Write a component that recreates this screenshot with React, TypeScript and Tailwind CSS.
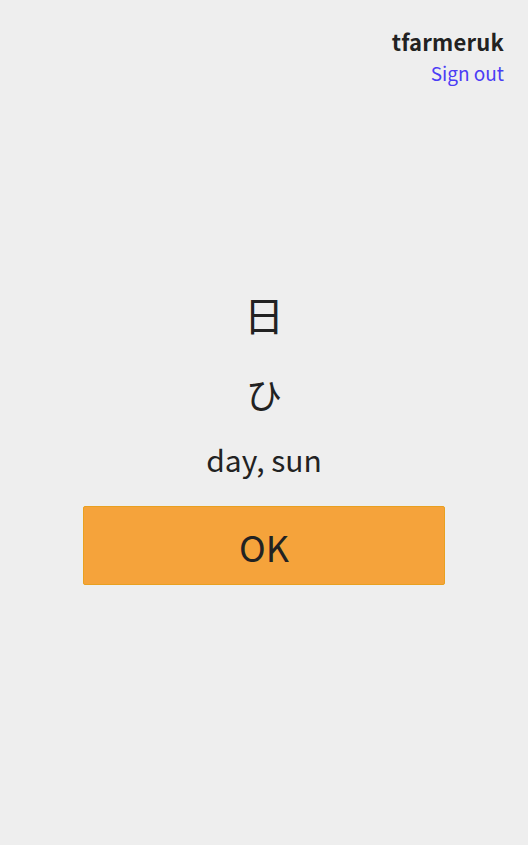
export default function App() {
  return (
    <div
      className="min-h-[845px] bg-[#eeeeee] text-[#222222] flex flex-col"
      style={{ fontFamily: '"Noto Sans CJK JP", "Noto Sans", sans-serif' }}
    >
      <header className="flex flex-col items-end pt-[26px] pr-[24px]">
        <div className="text-[22px] font-bold leading-[30px] tracking-[0.2px]">tfarmeruk</div>
        <a href="#" className="text-[19px] leading-[32px] mt-[1px] text-[#4b3cf5]">
          Sign out
        </a>
      </header>
      <main className="flex flex-col items-center pt-[197px]">
        <div className="text-[40px] leading-[56px]">日</div>
        <div className="text-[36px] leading-[56px] mt-[23px]">ひ</div>
        <div className="text-[30px] leading-[44px] mt-[16px]">day, sun</div>
        <button className="mt-[25px] w-[362px] h-[79px] rounded-[2px] border border-[#e9a020] bg-[#f5a33b] text-[36px] text-[#222222]">
          OK
        </button>
      </main>
    </div>
  );
}
